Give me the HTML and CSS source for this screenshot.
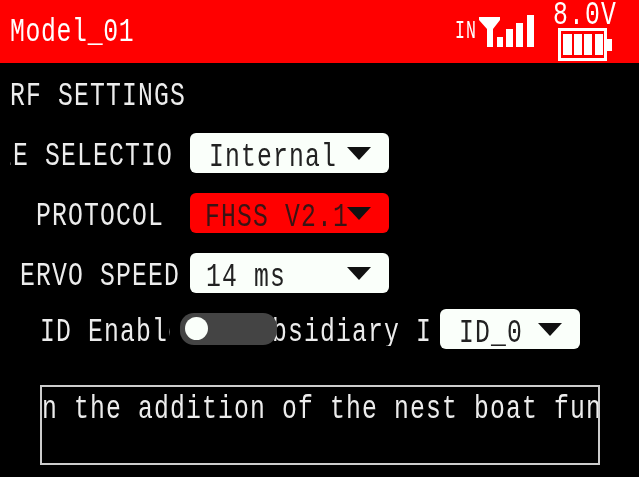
FILE: index.html
```html
<!DOCTYPE html>
<html lang="en">
<head>
<meta charset="utf-8">
<title>RF Settings</title>
<link rel="stylesheet" href="styles.css">
</head>
<body>
<div class="screen">
  <header class="topbar">
    <div class="model"><span class="cond">Model_01</span></div>
    <div class="status">
      <div class="in"><span class="cond small">IN</span></div>
      <svg class="signal" width="56" height="33" viewBox="0 0 56 33" aria-hidden="true">
        <path d="M0 2h21v3l-7 9v18H8V14L0 5z" fill="#fff"/>
        <rect x="18" y="22" width="6" height="10" fill="#fff"/>
        <rect x="27" y="14" width="7" height="18" fill="#fff"/>
        <rect x="37" y="8" width="7" height="24" fill="#fff"/>
        <rect x="48" y="0" width="7" height="32" fill="#fff"/>
      </svg>
      <div class="power">
        <div class="volt"><span class="cond">8.0V</span></div>
        <svg class="battery" width="54" height="33" viewBox="0 0 54 33" aria-hidden="true">
          <rect x="1.5" y="1.5" width="46" height="30" fill="none" stroke="#fff" stroke-width="3"/>
          <rect x="5" y="6" width="9" height="21" fill="#fff"/>
          <rect x="16" y="6" width="8" height="21" fill="#fff"/>
          <rect x="26" y="6" width="8" height="21" fill="#fff"/>
          <rect x="37" y="6" width="8" height="21" fill="#fff"/>
          <rect x="49" y="11" width="5" height="12" fill="#fff"/>
        </svg>
      </div>
    </div>
  </header>

  <main class="content">
    <div class="title"><span class="cond">RF SETTINGS</span></div>

    <div class="row">
      <div class="label l-module"><span class="cond">MODULE SELECTION</span></div>
      <div class="dd"><span class="cond">Internal</span><i class="arrow"></i></div>
    </div>
    <div class="row">
      <div class="label l-protocol"><span class="cond">PROTOCOL</span></div>
      <div class="dd dd-active"><span class="cond">FHSS V2.1</span><i class="arrow"></i></div>
    </div>
    <div class="row">
      <div class="label l-servo"><span class="cond">SERVO SPEED</span></div>
      <div class="dd dd-ms"><span class="cond">14 ms</span><i class="arrow"></i></div>
    </div>
    <div class="row row-id">
      <div class="label l-rid"><span class="cond">ID Enable</span></div>
      <div class="toggle"><i class="knob"></i></div>
      <div class="label l-sub"><span class="cond">Subsidiary ID</span></div>
      <div class="dd dd-small"><span class="cond">ID_0</span><i class="arrow"></i></div>
    </div>

    <div class="notice"><span class="cond">In the addition of the nest boat function</span></div>
  </main>
</div>
</body>
</html>
```
FILE: styles.css
```css
* { box-sizing: border-box; }
html, body { margin: 0; padding: 0; background: #000; }
body { width: 639px; height: 477px; overflow: hidden; }
.screen {
  width: 639px; height: 477px; overflow: hidden; background: #000; color: #ececec;
  font-family: "Liberation Mono", "DejaVu Sans Mono", monospace;
  filter: blur(0.45px);
}
.cond {
  display: inline-block; white-space: nowrap; font-size: 33px; line-height: 1;
  letter-spacing: 1.53px;
  transform: scaleX(0.75); transform-origin: left center;
}
.topbar {
  height: 63px; background: #f00; color: #fff;
  display: flex; align-items: center; justify-content: space-between;
  padding: 0 23px 0 10px;
}
.model { margin-top: 2px; }
.model .cond { letter-spacing: 0.9px; }
.status { display: flex; align-items: center; }
.in { width: 25px; height: 30px; overflow: hidden; line-height: 30px; }
.small { font-size: 25px; letter-spacing: 1.5px; transform: scaleX(0.66); vertical-align: top; line-height: 30px; }
.signal { margin-left: -1px; margin-right: 18px; }
.power { width: 63px; height: 63px; display: flex; flex-direction: column; align-items: center; }
.volt { height: 28px; width: 64px; line-height: 28px; }
.volt .cond { vertical-align: top; line-height: 31px; }
.battery { flex: none; }

.content { padding-top: 17px; }
.title { height: 30px; margin: 0 0 23px 10px; line-height: 30px; }
.title .cond { vertical-align: top; line-height: 34px; }
.row { display: flex; align-items: center; height: 40px; margin-bottom: 20px; }
.label { flex: none; height: 34px; line-height: 34px; overflow: hidden; }
.label .cond { vertical-align: top; line-height: 42px; }
.l-module { width: 162px; margin: 0 18px 0 10px; }
.l-module .cond { margin-left: -77px; }
.l-protocol { width: 162px; margin: 0 18px 0 10px; }
.l-protocol .cond { margin-left: 26px; }
.l-servo { width: 160px; margin: 0 10px 0 20px; }
.l-servo .cond { margin-left: -16px; }
.dd {
  position: relative; flex: none; width: 199px; height: 40px; padding-left: 19px;
  background: #fafffa; color: #222; border-radius: 6px; line-height: 40px; overflow: hidden;
}
.dd .cond { vertical-align: top; line-height: 50px; }
.dd-active { background: #f00; color: #3a1414; padding-left: 15px; }
.dd-ms { padding-left: 16px; }
.arrow {
  position: absolute; top: 14px; right: 18px; width: 0; height: 0;
  border-left: 12px solid transparent; border-right: 12px solid transparent;
  border-top: 13px solid #111;
}
.row-id { margin-top: -4px; margin-bottom: 36px; }
.l-rid { width: 130px; margin: 0 10px 0 40px; }
.toggle {
  position: relative; z-index: 1; flex: none; width: 97px; height: 32px;
  background: #444; border-radius: 14px; display: flex; align-items: center; padding-left: 5px;
}
.knob { display: block; width: 23px; height: 23px; border-radius: 50%; background: #fafffa; margin-top: -2px; }
.l-sub { width: 192px; margin: 0 8px 0 -37px; }
.dd-small { width: 140px; }
.notice {
  width: 560px; height: 80px; margin-left: 40px; border: 2px solid #ccc;
  overflow: hidden; line-height: 40px;
}
.notice .cond { margin-left: -16px; vertical-align: top; line-height: 46px; }
```
